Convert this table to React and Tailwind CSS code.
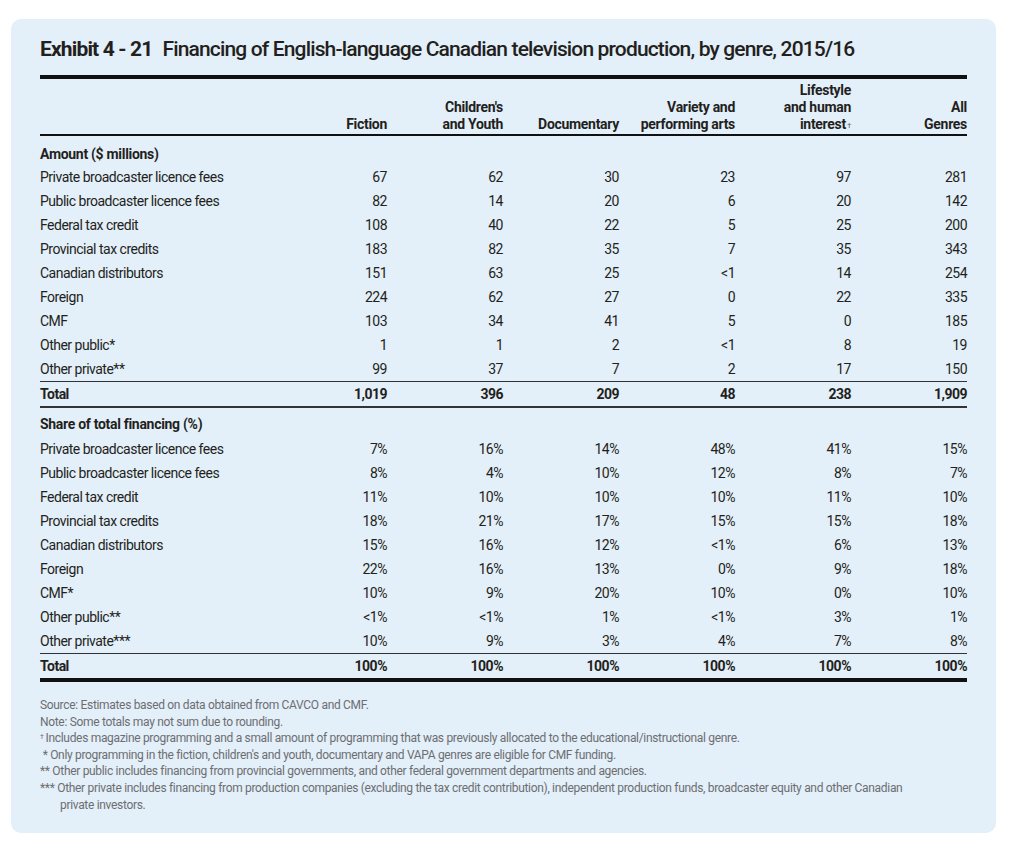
import React from "react";

const amount = [
  ["Private broadcaster licence fees", "67", "62", "30", "23", "97", "281"],
  ["Public broadcaster licence fees", "82", "14", "20", "6", "20", "142"],
  ["Federal tax credit", "108", "40", "22", "5", "25", "200"],
  ["Provincial tax credits", "183", "82", "35", "7", "35", "343"],
  ["Canadian distributors", "151", "63", "25", "<1", "14", "254"],
  ["Foreign", "224", "62", "27", "0", "22", "335"],
  ["CMF", "103", "34", "41", "5", "0", "185"],
  ["Other public*", "1", "1", "2", "<1", "8", "19"],
  ["Other private**", "99", "37", "7", "2", "17", "150"],
];
const amountTotal = ["Total", "1,019", "396", "209", "48", "238", "1,909"];

const share = [
  ["Private broadcaster licence fees", "7%", "16%", "14%", "48%", "41%", "15%"],
  ["Public broadcaster licence fees", "8%", "4%", "10%", "12%", "8%", "7%"],
  ["Federal tax credit", "11%", "10%", "10%", "10%", "11%", "10%"],
  ["Provincial tax credits", "18%", "21%", "17%", "15%", "15%", "18%"],
  ["Canadian distributors", "15%", "16%", "12%", "<1%", "6%", "13%"],
  ["Foreign", "22%", "16%", "13%", "0%", "9%", "18%"],
  ["CMF*", "10%", "9%", "20%", "10%", "0%", "10%"],
  ["Other public**", "<1%", "<1%", "1%", "<1%", "3%", "1%"],
  ["Other private***", "10%", "9%", "3%", "4%", "7%", "8%"],
];
const shareTotal = ["Total", "100%", "100%", "100%", "100%", "100%", "100%"];

const grid = "grid grid-cols-[231px_116px_116px_116px_116px_116px_116px]";

function Row({ r, bold }) {
  return (
    <div className={`${grid} h-[24px] items-center text-[14px] leading-[24px] tracking-[-0.5px] whitespace-nowrap ${bold ? "font-bold" : ""}`}>
      {r.map((c, i) => (
        <div key={i} className={i === 0 ? "text-left" : "text-right"}>{c}</div>
      ))}
    </div>
  );
}

export default function App() {
  return (
    <div className="bg-white w-[1024px] h-[858px] pt-[19px] pl-[11px] font-['Roboto',sans-serif] text-[#231f20]">
      <div className="w-[985px] h-[814px] rounded-[10px] bg-[#e3eff9] pl-[29px] pt-[17px]">
        <h1 className="text-[21px] leading-[26px] font-bold tracking-[-0.85px] whitespace-nowrap">
          Exhibit 4 - 21<span className="font-medium ml-[10px]">Financing of English-language Canadian television production, by genre, 2015/16</span>
        </h1>
        <div className="w-[927px] mt-[13px]">
          <div className="h-[4px] bg-[#111]" />
          <div className={`${grid} h-[55px] items-end pb-[1px] text-[14px] leading-[17px] font-bold tracking-[-0.3px] whitespace-nowrap`}>
            <div />
            <div className="text-right">Fiction</div>
            <div className="text-right">Children's<br />and Youth</div>
            <div className="text-right">Documentary</div>
            <div className="text-right">Variety and<br />performing arts</div>
            <div className="text-right">Lifestyle<br />and human<br />interest<sup className="text-[8px] font-normal text-[#666] ml-[1px] relative -top-[1px]">†</sup></div>
            <div className="text-right">All<br />Genres</div>
          </div>
          <div className="h-[2px] bg-[#111]" />
          <div className="h-[29px] pt-[6px] text-[14px] leading-[24px] font-bold tracking-[-0.3px]">Amount ($ millions)</div>
          {amount.map((r, i) => <Row key={i} r={r} />)}
          <div className="h-[1px] bg-[#333]" />
          <Row r={amountTotal} bold />
          <div className="h-[2px] bg-[#333]" />
          <div className="h-[29px] pt-[4px] text-[14px] leading-[24px] font-bold tracking-[-0.3px]">Share of total financing (%)</div>
          {share.map((r, i) => <Row key={i} r={r} />)}
          <div className="h-[1px] bg-[#333]" />
          <Row r={shareTotal} bold />
          <div className="h-[4px] bg-[#111]" />
        </div>
        <div className="mt-[15px] text-[12px] leading-[16.6px] tracking-[-0.32px] text-[#6d6e71] whitespace-nowrap">
          <p>Source: Estimates based on data obtained from CAVCO and CMF.</p>
          <p>Note: Some totals may not sum due to rounding.</p>
          <p><sup className="text-[7px] mr-[2px]">†</sup>Includes magazine programming and a small amount of programming that was previously allocated to the educational/instructional genre.</p>
          <p>&nbsp;* Only programming in the fiction, children's and youth, documentary and VAPA genres are eligible for CMF funding.</p>
          <p>** Other public includes financing from provincial governments, and other federal government departments and agencies.</p>
          <p>*** Other private includes financing from production companies (excluding the tax credit contribution), independent production funds, broadcaster equity and other Canadian</p>
          <p className="pl-[20px]">private investors.</p>
        </div>
      </div>
    </div>
  );
}
